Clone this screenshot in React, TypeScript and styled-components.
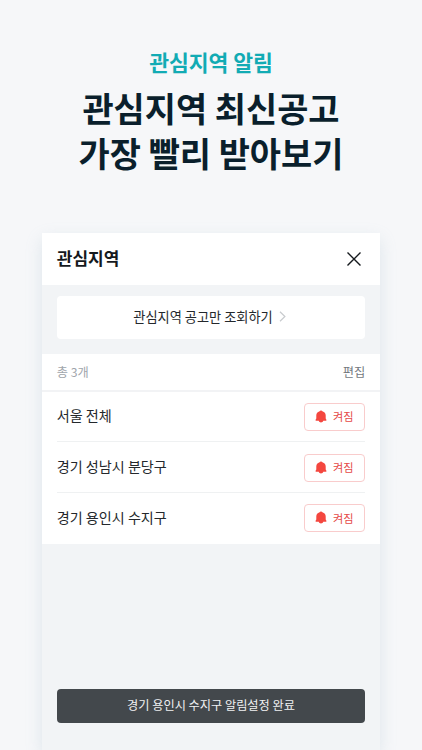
import React from "react";
import styled, { createGlobalStyle } from "styled-components";

const GlobalStyle = createGlobalStyle`
  * { box-sizing: border-box; }
  body {
    margin: 0;
    background: #f6f7f9;
    font-family: "Noto Sans CJK KR", "Noto Sans", sans-serif;
    overflow: hidden;
  }
  button { font-family: inherit; padding: 0; margin: 0; border: 0; background: none; }
`;

const Page = styled.main`
  width: 422px;
  height: 750px;
  overflow: hidden;
  display: flex;
  flex-direction: column;
  align-items: center;
  background: #f6f7f9;
`;

const Intro = styled.header`
  height: 232.5px;
  flex: none;
  padding-top: 46px;
  text-align: center;
  white-space: nowrap;
`;

const Eyebrow = styled.p`
  margin: 0;
  font-size: 21.6px;
  line-height: 32px;
  font-weight: 700;
  letter-spacing: -0.1px;
  color: #12abb4;
`;

const Headline = styled.h1`
  margin: 7px 0 0;
  font-size: 33.9px;
  line-height: 45px;
  font-weight: 700;
  color: #0a1f2c;
`;

const Card = styled.section`
  width: 338.5px;
  flex: 1;
  display: flex;
  flex-direction: column;
  background: #f2f4f6;
  box-shadow: 0 6px 16px rgba(130, 165, 185, 0.2);
`;

const CardHeader = styled.div`
  height: 52.5px;
  flex: none;
  padding: 0 19px 2px 15px;
  display: flex;
  align-items: center;
  justify-content: space-between;
  background: #fff;
`;

const CardTitle = styled.h2`
  margin: 0;
  font-size: 17px;
  line-height: 24px;
  font-weight: 700;
  color: #15191d;
`;

const CloseButton = styled.button`
  display: flex;
  padding-top: 2px;
`;

const BrowseButton = styled.button`
  height: 42.5px;
  flex: none;
  margin: 11px 15px 15px;
  padding: 0 3px 1px 0;
  display: flex;
  align-items: center;
  justify-content: center;
  gap: 6px;
  border-radius: 4px;
  background: #fff;
  font-size: 13.2px;
  color: #24282c;
`;

const Summary = styled.div`
  height: 38px;
  flex: none;
  padding: 0 15px;
  display: flex;
  align-items: center;
  justify-content: space-between;
  border-bottom: 2px solid #f2f3f5;
  background: #fff;
  font-size: 12.2px;
`;

const Count = styled.span`
  color: #a0a5ab;
`;

const EditButton = styled.button`
  font-size: 12.2px;
  color: #73787e;
`;

const RegionList = styled.ul`
  margin: 0;
  padding: 0 15px;
  list-style: none;
  background: #fff;
`;

const RegionRow = styled.li`
  height: 50.8px;
  display: flex;
  align-items: center;
  justify-content: space-between;
  font-size: 14.1px;
  color: #24282c;
  border-bottom: 1px solid #eff1f2;
  &:last-child { border-bottom-color: transparent; }
`;

const RegionName = styled.span`
  padding-bottom: 2px;
`;

const AlarmToggle = styled.button`
  width: 61px;
  height: 28px;
  margin-top: 1px;
  padding: 0 1px 1px 0;
  display: flex;
  align-items: center;
  justify-content: center;
  gap: 6px;
  border: 1px solid #f9cccc;
  border-radius: 4px;
  font-size: 11.2px;
  color: #e54a47;
`;

const Toast = styled.div`
  height: 34px;
  margin: auto 15px 27.5px;
  padding-bottom: 2px;
  display: flex;
  align-items: center;
  justify-content: center;
  border-radius: 4px;
  background: #43484c;
  font-size: 12.2px;
  color: #f1f2f3;
`;

const CloseIcon = () => (
  <svg width="14" height="14" viewBox="0 0 14 14" fill="none" stroke="#15191d" strokeWidth="1.4">
    <path d="M.5.5l13 13M13.5.5l-13 13" />
  </svg>
);

const ChevronIcon = () => (
  <svg width="7" height="11" viewBox="0 0 7 11" fill="none" stroke="#c8cbce" strokeWidth="1.2">
    <path d="M1 .7l4.900 4.800L1 10.300" />
  </svg>
);

const BellIcon = () => (
  <svg width="12" height="13" viewBox="0 0 12 13" fill="#f4473f">
    <path d="M6 .4c.7 0 1.200.3 1.400.8 2.100.6 3.300 2.200 3.300 4.300v2.900l.7 1.300c.2.500-.1 1-.6 1H8.300c-.3 1-1.300 1.700-2.300 1.700s-2-.7-2.300-1.700H1.200c-.5 0-.8-.5-.6-1l.7-1.300V5.500c0-2.100 1.200-3.700 3.300-4.300.2-.5.700-.8 1.400-.8z" />
  </svg>
);

const regions = ["서울 전체", "경기 성남시 분당구", "경기 용인시 수지구"];

export default function App() {
  return (
    <>
      <GlobalStyle />
      <Page>
        <Intro>
          <Eyebrow>관심지역 알림</Eyebrow>
          <Headline>
            관심지역 최신공고
            <br />
            가장 빨리 받아보기
          </Headline>
        </Intro>
        <Card>
          <CardHeader>
            <CardTitle>관심지역</CardTitle>
            <CloseButton aria-label="닫기">
              <CloseIcon />
            </CloseButton>
          </CardHeader>
          <BrowseButton>
            관심지역 공고만 조회하기
            <ChevronIcon />
          </BrowseButton>
          <Summary>
            <Count>총 3개</Count>
            <EditButton>편집</EditButton>
          </Summary>
          <RegionList>
            {regions.map((region) => (
              <RegionRow key={region}>
                <RegionName>{region}</RegionName>
                <AlarmToggle>
                  <BellIcon />
                  켜짐
                </AlarmToggle>
              </RegionRow>
            ))}
          </RegionList>
          <Toast>경기 용인시 수지구 알림설정 완료</Toast>
        </Card>
      </Page>
    </>
  );
}
